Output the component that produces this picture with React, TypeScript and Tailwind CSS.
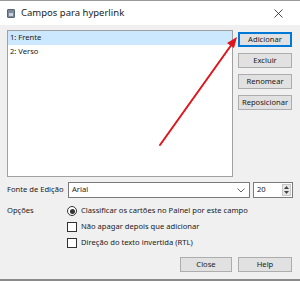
import React from "react";

const font = { fontFamily: '"Noto Sans", "Segoe UI", sans-serif' };

function Btn({ label, primary, w = "w-[54px]" }: { label: string; primary?: boolean; w?: string }) {
  return (
    <div
      className={`${w} h-[15px] flex items-center justify-center text-[7.6px] text-[#1a1a1a] bg-[#e1e1e1] border ${
        primary ? "border-[#0078d7] shadow-[inset_0_0_0_1px_#0078d7]" : "border-[#adadad]"
      }`}
    >
      {label}
    </div>
  );
}

export default function App() {
  return (
    <div className="relative w-[300px] h-[281px] bg-[#f0f0f0] overflow-hidden flex flex-col" style={font}>
      {/* title bar */}
      <div className="h-[25px] bg-white border-t border-[#9a9a9a] flex items-center shrink-0">
        <div className="ml-[7px] w-[8px] h-[9px] bg-[#7d8a99] border border-[#5a6573] rounded-[1px] flex items-end justify-center">
          <div className="w-[4px] h-[3px] bg-[#c9d3dd] mb-[1px]" />
        </div>
        <span className="ml-[6px] text-[9.5px] text-[#1a1a1a]">Campos para hyperlink</span>
        <svg className="ml-auto mr-[17px]" width="9" height="9" viewBox="0 0 9 9">
          <path d="M0.5 0.5 L8.5 8.5 M8.5 0.5 L0.5 8.5" stroke="#333" strokeWidth="0.9" />
        </svg>
      </div>

      {/* list + buttons */}
      <div className="flex mt-[5px]">
        <div className="ml-[7px] w-[226px] h-[147px] bg-white border border-[#a0a0a0] flex flex-col">
          <div className="h-[14px] bg-[#cce8ff] flex items-center pl-[2px] text-[7.6px] text-[#1a1a1a]">1: Frente</div>
          <div className="h-[13px] flex items-center pl-[2px] text-[7.6px] text-[#1a1a1a]">2: Verso</div>
        </div>
        <div className="ml-[5px] flex flex-col pt-[2px]">
          <Btn label="Adicionar" primary />
          <div className="mt-[6px]"><Btn label="Excluir" /></div>
          <div className="mt-[6px]"><Btn label="Renomear" /></div>
          <div className="mt-[6px]"><Btn label="Reposicionar" /></div>
        </div>
      </div>

      {/* font row */}
      <div className="flex items-center mt-[5px] h-[16px]">
        <span className="ml-[7px] w-[61px] text-[7.6px] text-[#1a1a1a]">Fonte de Edição</span>
        <div className="w-[182px] h-[16px] bg-white border border-[#7a7a7a] flex items-center pl-[3px] text-[7.6px] text-[#1a1a1a]">
          Arial
          <svg className="ml-auto mr-[4px]" width="8" height="5" viewBox="0 0 8 5">
            <path d="M0.5 0.5 L4 4 L7.5 0.5" stroke="#555" strokeWidth="0.9" fill="none" />
          </svg>
        </div>
        <div className="ml-[3px] w-[40px] h-[16px] bg-white border border-[#7a7a7a] flex items-center pl-[3px] text-[7.6px] text-[#1a1a1a]">
          20
          <div className="ml-auto mr-[1px] w-[9px] h-[12px] bg-[#e8e8e8] border border-[#c8c8c8] flex flex-col items-center justify-center gap-[2px]">
            <svg width="5" height="3" viewBox="0 0 5 3"><path d="M0 3 L2.5 0 L5 3Z" fill="#444" /></svg>
            <svg width="5" height="3" viewBox="0 0 5 3"><path d="M0 0 L2.5 3 L5 0Z" fill="#444" /></svg>
          </div>
        </div>
      </div>

      {/* options */}
      <div className="flex mt-[5px]">
        <span className="ml-[7px] w-[60px] h-[16px] flex items-center text-[7.6px] text-[#1a1a1a]">Opções</span>
        <div className="flex flex-col">
          <div className="h-[16px] flex items-center">
            <div className="w-[10px] h-[10px] rounded-full border border-[#333] bg-white flex items-center justify-center">
              <div className="w-[5px] h-[5px] rounded-full bg-[#333]" />
            </div>
            <span className="ml-[4px] text-[7.6px] text-[#1a1a1a]">Classificar os cartões no Painel por este campo</span>
          </div>
          <div className="h-[16px] flex items-center">
            <div className="w-[10px] h-[10px] border border-[#333] bg-white" />
            <span className="ml-[4px] text-[7.6px] text-[#1a1a1a]">Não apagar depois que adicionar</span>
          </div>
          <div className="h-[16px] flex items-center">
            <div className="w-[10px] h-[10px] border border-[#333] bg-white" />
            <span className="ml-[4px] text-[7.6px] text-[#1a1a1a]">Direção do texto invertida (RTL)</span>
          </div>
        </div>
      </div>

      {/* bottom buttons */}
      <div className="flex mt-[6px] ml-[180px]">
        <Btn label="Close" w="w-[52px]" />
        <div className="ml-[6px]"><Btn label="Help" /></div>
      </div>

      <div className="mt-auto h-[2px] bg-[#8a8a8a]" />

      {/* red arrow overlay */}
      <svg className="absolute left-0 top-0 pointer-events-none" width="300" height="281" viewBox="0 0 300 281">
        <line x1="160" y1="145" x2="232" y2="44" stroke="#e0141b" strokeWidth="2" strokeLinecap="round" />
        <path d="M237 37 L227 43 L234 48 Z" fill="#e0141b" />
      </svg>
    </div>
  );
}
